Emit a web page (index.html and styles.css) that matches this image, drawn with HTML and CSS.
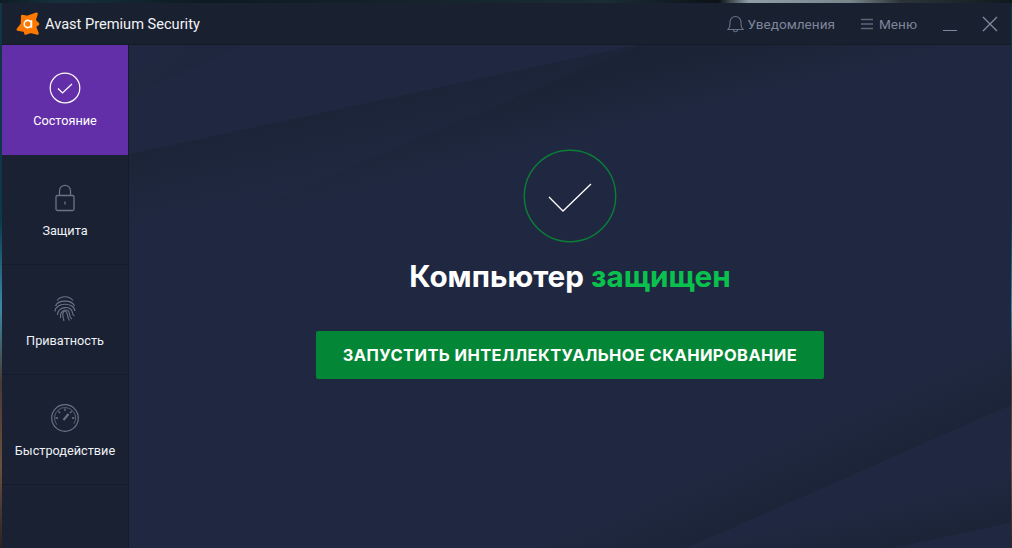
FILE: index.html
```html
<!DOCTYPE html>
<html lang="ru">
<head>
    <meta charset="UTF-8">
    <meta name="viewport" content="width=device-width, initial-scale=1.0">
    <title>Avast Premium Security</title>
    <link rel="stylesheet" href="styles.css">
</head>
<body>
    <div class="window">
        <header class="titlebar">
            <div class="brand">
                <svg width="24" height="24" viewBox="0 0 24 24">
                    <path fill="#ff7800" stroke="#ff7800" stroke-width="2.600" stroke-linejoin="round" d="M6.300 4L11.300 5 20.500 1.800 18.500 8.500 22 12 18.800 14.500 21.500 21.500 14.500 19.800 9.500 21.500 8.800 18.800 1.800 17.500 6 12z"/>
                    <circle cx="11.800" cy="12" r="3.600" fill="none" stroke="#fff" stroke-width="1.600"/>
                    <path stroke="#fff" stroke-width="1.600" d="M15.400 8.200v7.600"/>
                </svg>
                <span class="brand-name">Avast Premium Security</span>
            </div>
            <nav class="window-controls">
                <a class="top-link">
                    <svg width="17" height="18" viewBox="0 0 17 18" fill="none" stroke="#69728a" stroke-width="1.100">
                        <path d="M1 14.500c1.500-1.500 2-2.800 2-5.500V7a5.500 5.500 0 0 1 11 0v2c0 2.700.5 4 2 5.500z"/>
                        <path d="M6.500 15c0 2.300 4 2.300 4 0"/>
                    </svg>
                    Уведомления
                </a>
                <a class="top-link menu-link">
                    <svg width="12" height="12" viewBox="0 0 12 12" stroke="#5c6579" stroke-width="1.500">
                        <path d="M0 1.500h12M0 6h12M0 10.500h12"/>
                    </svg>
                    Меню
                </a>
                <span class="minimize"></span>
                <svg class="close" width="16" height="16" viewBox="0 0 16 16" stroke="#7f889c" stroke-width="1.400">
                    <path d="M1 1l14 14M15 1L1 15"/>
                </svg>
            </nav>
        </header>
        <div class="layout">
            <aside class="sidebar">
                <div class="side-item active">
                    <svg width="32" height="32" viewBox="0 0 32 32" fill="none" stroke="#fff" stroke-width="1.200">
                        <circle cx="16" cy="16" r="14.800"/>
                        <path d="M9 16.500l4.500 4.500 9.500-9"/>
                    </svg>
                    <span>Состояние</span>
                </div>
                <div class="side-item">
                    <svg class="side-icon" width="20" height="28" viewBox="0 0 20 28" fill="none" stroke="#6b7385" stroke-width="1.300">
                        <rect x="1" y="11.500" width="18" height="15" rx="1.500"/>
                        <path d="M4.500 11.500V6.800a5.500 5.500 0 0 1 11 0v4.700"/>
                        <path d="M10 17.500v3"/>
                    </svg>
                    <span>Защита</span>
                </div>
                <div class="side-item">
                    <svg class="side-icon" width="22" height="27" viewBox="0 0 22 27" fill="none" stroke="#6b7385" stroke-width="1.100">
                        <path d="M3 5.500C7 .5 15 .5 19 5.500"/>
                        <path d="M1.500 11C4 4.500 18 4.500 20.500 11"/>
                        <path d="M1 16.500C1 7.500 20 6.500 21 16"/>
                        <path d="M3.500 20C3 11.500 18 9.500 18.500 18c.1 1.500.8 2.500 2 3"/>
                        <path d="M6.500 23C5.500 14 15.500 12.500 15.500 19c0 2.500 1 4 2.500 5"/>
                        <path d="M10 26C8.500 21 8 16 11 16s1.500 5 4.500 9.500"/>
                    </svg>
                    <span>Приватность</span>
                </div>
                <div class="side-item">
                    <svg class="side-icon" width="28" height="28" viewBox="0 0 28 28" fill="none" stroke="#6b7385" stroke-width="1.200">
                        <circle cx="14" cy="14" r="13.300"/>
                        <circle cx="14" cy="14" r="10.500" stroke-width=".7" stroke-dasharray="46 20" transform="rotate(140 14 14)"/>
                        <path stroke-width="1.300" d="M14 4.500v2.500M7.300 7.300l1.800 1.800M4.500 14H7M20.700 7.300l-1.800 1.800M23.500 14H21"/>
                        <path stroke-width="2" d="M12.500 16l5-6"/>
                    </svg>
                    <span>Быстродействие</span>
                </div>
            </aside>
            <main class="content">
                <svg class="backdrop" width="882" height="503" viewBox="0 0 882 503">
                    <defs>
                        <linearGradient id="shade1" gradientUnits="userSpaceOnUse" x1="250" y1="55" x2="265" y2="125">
                            <stop offset="0" stop-color="#1a2234" stop-opacity=".65"/>
                            <stop offset="1" stop-color="#1a2234" stop-opacity="0"/>
                        </linearGradient>
                        <linearGradient id="shade2" gradientUnits="userSpaceOnUse" x1="511" y1="0" x2="530" y2="78">
                            <stop offset="0" stop-color="#1a2234" stop-opacity=".7"/>
                            <stop offset="1" stop-color="#1a2234" stop-opacity="0"/>
                        </linearGradient>
                        <linearGradient id="shade3" gradientUnits="userSpaceOnUse" x1="58" y1="26" x2="30" y2="0">
                            <stop offset="0" stop-color="#1a2234" stop-opacity=".25"/>
                            <stop offset="1" stop-color="#1a2234" stop-opacity="0"/>
                        </linearGradient>
                        <linearGradient id="shade4" gradientUnits="userSpaceOnUse" x1="720" y1="430" x2="696" y2="375">
                            <stop offset="0" stop-color="#1a2234" stop-opacity=".65"/>
                            <stop offset="1" stop-color="#1a2234" stop-opacity="0"/>
                        </linearGradient>
                        <linearGradient id="shade5" gradientUnits="userSpaceOnUse" x1="820" y1="490" x2="810" y2="445">
                            <stop offset="0" stop-color="#1a2234" stop-opacity=".7"/>
                            <stop offset="1" stop-color="#1a2234" stop-opacity="0"/>
                        </linearGradient>
                    </defs>
                    <polygon fill="url(#shade3)" points="0,0 115,0 0,52"/>
                    <polygon fill="url(#shade1)" points="0,109 507,0 882,0 882,300 0,300"/>
                    <polygon fill="url(#shade2)" points="0,215 511,0 882,0 882,300 0,300"/>
                    <polygon fill="url(#shade4)" points="558,503 882,360 882,150 300,503"/>
                    <polygon fill="url(#shade5)" points="764,503 882,478 882,300 500,503"/>
                </svg>
                <svg class="status-icon" width="94" height="94" viewBox="0 0 94 94" fill="none">
                    <circle cx="47" cy="47" r="45.700" stroke="#0a7f37" stroke-width="1.400"/>
                    <path stroke="#fff" stroke-width="1.300" d="M26 48l14 14 28-27"/>
                </svg>
                <h1 class="status-title">Компьютер <span class="ok">защищен</span></h1>
                <button class="scan-btn">ЗАПУСТИТЬ ИНТЕЛЛЕКТУАЛЬНОЕ СКАНИРОВАНИЕ</button>
            </main>
        </div>
    </div>
</body>
</html>
```

FILE: styles.css
```css
html, body {
    height: 100%;
}

body {
    margin: 0;
    overflow: hidden;
    background:
        linear-gradient(90deg, #0f1c24 0, #16313c 6%, #0e1a22 20%, #1a2c34 60%, #0c1218 71%, #8f9ea6 74%, #78868c 84%, #2c3438 89%, #0f1a20 100%) top / 100% 3px no-repeat,
        linear-gradient(180deg, #123544 0, #0a3a4c 40%, #3a8aa8 56%, #4a3a30 70%, #6a5040 85%, #2a2420 100%);
    font-family: Inter, 'Liberation Sans', sans-serif;
    color: #fff;
}

.window {
    display: flex;
    flex-direction: column;
    height: 545px;
    margin: 3px 1px 0 2px;
}

.titlebar {
    display: flex;
    flex: none;
    align-items: center;
    justify-content: space-between;
    height: 41px;
    background: #19202f;
    border-bottom: 1px solid #141a28;
}

.brand {
    display: flex;
    align-items: center;
    gap: 5px;
    padding-left: 14px;
}

.brand-name {
    font-family: Roboto, sans-serif;
    font-size: 14.600px;
    color: #f2f4f7;
}

.window-controls {
    display: flex;
    align-items: center;
    padding-right: 13px;
}

.top-link {
    display: flex;
    align-items: center;
    gap: 3px;
    font-family: Roboto, sans-serif;
    font-size: 13.600px;
    color: #7d869b;
}

.menu-link {
    gap: 6px;
    margin-left: 26px;
}

.minimize {
    width: 14px;
    height: 1px;
    margin: 14px 0 0 26px;
    background: #7f889c;
}

.close {
    margin-left: 25px;
}

.layout {
    display: flex;
    flex: 1;
    min-height: 0;
}

.sidebar {
    flex: none;
    width: 126px;
    background: #1a2133;
    border-right: 1px solid #151b2a;
}

.side-item {
    display: flex;
    flex-direction: column;
    align-items: center;
    justify-content: flex-end;
    box-sizing: border-box;
    height: 110px;
    padding-bottom: 25px;
    border-bottom: 1px solid #151b2a;
}

.side-icon {
    margin-bottom: 2px;
}

.side-item span {
    height: 16px;
    margin-top: 9px;
    font-family: Roboto, sans-serif;
    font-size: 12.700px;
    line-height: 16px;
    color: #eef1f5;
}

.side-item.active {
    background: #632fa8;
    border-bottom-color: #632fa8;
}

.side-item.active span {
    color: #fff;
}

.content {
    position: relative;
    display: flex;
    flex: 1;
    flex-direction: column;
    align-items: center;
    padding-top: 104px;
    background: #202841;
}

.backdrop {
    position: absolute;
    top: 0;
    left: 0;
}

.status-icon,
.status-title,
.scan-btn {
    position: relative;
}

.status-title {
    margin: 15px 0 0;
    font-size: 29.700px;
    line-height: 36px;
    font-weight: 700;
}

.ok {
    color: #0ac14d;
}

.scan-btn {
    width: 508px;
    height: 48px;
    margin-top: 37px;
    padding-bottom: 2px;
    border: none;
    border-radius: 2px;
    background: #038635;
    font-family: Inter, sans-serif;
    font-size: 16.500px;
    font-weight: 700;
    letter-spacing: 0.4px;
    color: #fff;
}
```
